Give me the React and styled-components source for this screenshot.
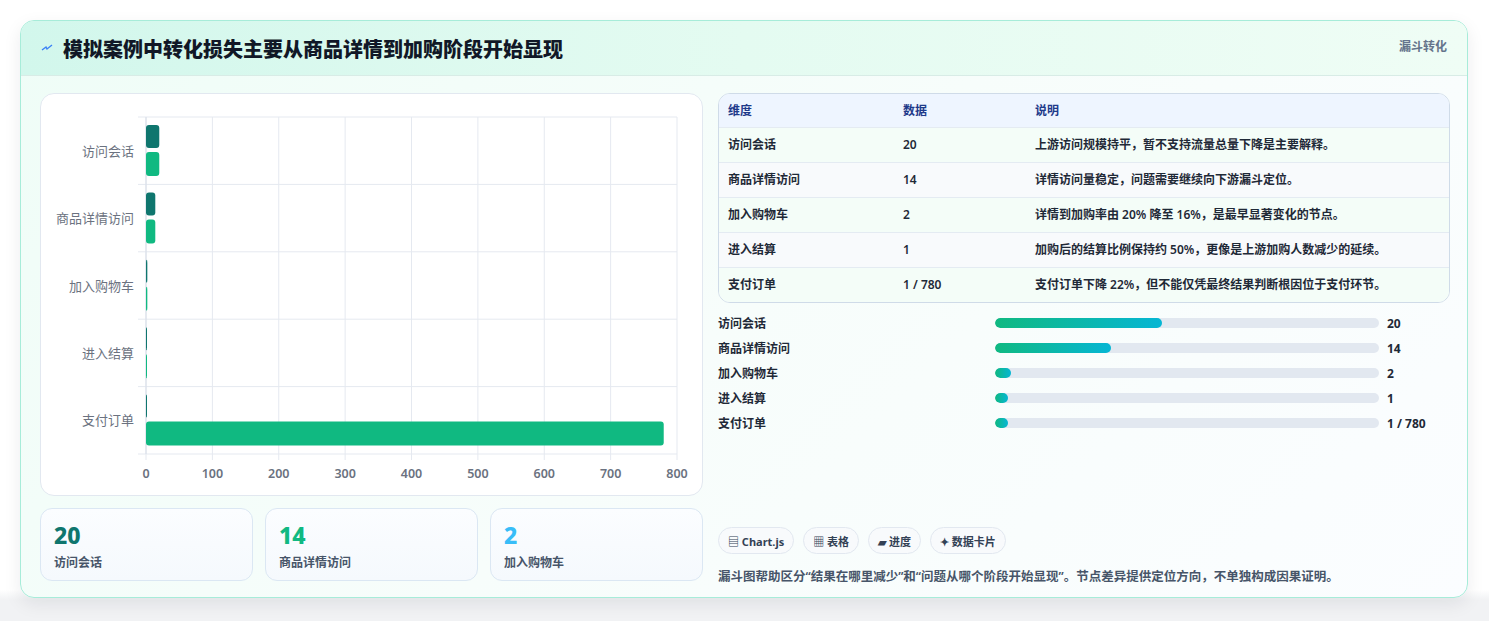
import React from "react";
import styled, { createGlobalStyle } from "styled-components";

const Global = createGlobalStyle`
  body { margin: 0; background: #fff; font-family: "Noto Sans", "Noto Sans CJK SC", sans-serif; }
`;

const Page = styled.div`
  padding: 20px 20px 22px 20px;
  background: linear-gradient(#fff 0, #fff 590px, #f1f2f4 600px);
  min-height: 621px;
  box-sizing: border-box;
`;

const Card = styled.div`
  width: 1448px;
  height: 578px;
  box-sizing: border-box;
  border: 1px solid #a7ecd9;
  border-radius: 14px;
  overflow: hidden;
  background: linear-gradient(135deg, #effdf7 0%, #f7fdfb 50%, #fbfdff 100%);
  box-shadow: 0 6px 18px rgba(15, 23, 42, 0.08);
`;

const Header = styled.div`
  height: 55px;
  box-sizing: border-box;
  display: flex;
  align-items: center;
  justify-content: space-between;
  padding: 0 20px 0 20px;
  background: linear-gradient(90deg, #d2f7ec 0%, #e4fbf1 50%, #effdf5 100%);
  border-bottom: 1px solid #d8ece6;
`;

const Title = styled.h1`
  margin: 0;
  font-size: 20px;
  font-weight: 800;
  color: #111827;
  display: flex;
  align-items: center;
  gap: 10px;
`;

const Tag = styled.span`
  font-size: 12px;
  font-weight: 700;
  color: #64748b;
  align-self: flex-start;
  margin-top: 16px;
`;

const Body = styled.div`
  display: grid;
  grid-template-columns: 663px 732px;
  column-gap: 15px;
  padding: 17px 19px 0 19px;
`;

const Col = styled.div`
  display: flex;
  flex-direction: column;
`;

const ChartBox = styled.div`
  height: 403px;
  box-sizing: border-box;
  border: 1px solid #e2e8f0;
  border-radius: 14px;
  background: #fff;
`;

const Stats = styled.div`
  display: grid;
  grid-template-columns: repeat(3, 1fr);
  gap: 12px;
  margin-top: 12px;
`;

const Stat = styled.div`
  height: 73px;
  box-sizing: border-box;
  border: 1px solid #dbe7f3;
  border-radius: 12px;
  background: linear-gradient(180deg, #fbfdff, #f5f9fd);
  padding: 12px 13px;
`;

const StatNum = styled.div`
  font-size: 23px;
  font-weight: 800;
  line-height: 28px;
  color: ${(p) => p.$color};
`;

const StatLabel = styled.div`
  font-size: 12px;
  font-weight: 600;
  color: #475569;
  margin-top: 4px;
`;

const Table = styled.div`
  border: 1px solid #cfdbe8;
  border-radius: 12px;
  overflow: hidden;
  background: #fff;
`;

const Row = styled.div`
  display: grid;
  grid-template-columns: 175px 132px 1fr;
  box-sizing: border-box;
  height: ${(p) => (p.$head ? 33 : 35)}px;
  line-height: 16px;
  align-items: center;
  padding: 0 9px;
  font-size: 12px;
  font-weight: ${(p) => (p.$head ? 700 : 600)};
  color: ${(p) => (p.$head ? "#1e3a8a" : "#1f2937")};
  background: ${(p) => (p.$head ? "#eef5ff" : p.$alt ? "#f8fafc" : "#f4fdf8")};
  border-top: ${(p) => (p.$head ? "none" : "1px solid #e4ebf2")};
`;

const Bars = styled.div`
  display: flex;
  flex-direction: column;
  gap: 8px;
  margin-top: 11px;
`;

const BarRow = styled.div`
  display: grid;
  grid-template-columns: 277px 392px 1fr;
  align-items: center;
  height: 17px;
  font-size: 12px;
  font-weight: 700;
  color: #1f2937;
`;

const Track = styled.div`
  height: 10px;
  border-radius: 5px;
  background: #e2e8f0;
  margin-right: 8px;
  overflow: hidden;
`;

const Fill = styled.div`
  height: 100%;
  border-radius: 5px;
  background: linear-gradient(90deg, #10b981, #06b6d4);
`;

const Chips = styled.div`
  display: flex;
  gap: 9px;
  margin-top: 96px;
`;

const Chip = styled.span`
  height: 27px;
  box-sizing: border-box;
  padding: 0 9px;
  display: inline-flex;
  align-items: center;
  gap: 3px;
  border: 1px solid #e2e8f0;
  border-radius: 14px;
  background: #f8fafc;
  font-size: 11px;
  font-weight: 700;
  color: #334155;
`;

const Note = styled.p`
  margin: 12px 0 0 0;
  font-size: 12.5px;
  font-weight: 600;
  color: #475569;
`;

const cats = ["访问会话", "商品详情访问", "加入购物车", "进入结算", "支付订单"];
const dark = [20, 14, 2, 1, 1];
const green = [20, 14, 2, 1, 780];

function Chart() {
  const x0 = 105, x1 = 636, y0 = 23, y1 = 360;
  const rh = (y1 - y0) / 5;
  const sx = (x1 - x0) / 800;
  return (
    <svg width="661" height="401" style={{ display: "block" }}>
      {[0, 100, 200, 300, 400, 500, 600, 700, 800].map((t) => (
        <g key={t}>
          <line x1={x0 + t * sx} x2={x0 + t * sx} y1={y0} y2={y1 + 6} stroke="#e5e9f0" />
          <text x={x0 + t * sx} y={384} textAnchor="middle" fontSize="12.5" fontWeight="600" fill="#6b7280" fontFamily="Noto Sans">
            {t}
          </text>
        </g>
      ))}
      {[0, 1, 2, 3, 4, 5].map((i) => (
        <line key={i} x1={x0 - 8} x2={x1} y1={y0 + i * rh} y2={y0 + i * rh} stroke="#e5e9f0" />
      ))}
      <line x1={x0} x2={x0} y1={y0} y2={y1} stroke="#d8dee8" />
      {cats.map((c, i) => {
        const top = y0 + i * rh;
        return (
          <g key={c}>
            <text x={93} y={top + rh / 2 + 5} textAnchor="end" fontSize="13" fill="#6b7280" fontFamily="Noto Sans CJK SC">
              {c}
            </text>
            <rect x={x0} y={top + 8} width={Math.max(dark[i] * sx, 1)} height={23} rx={3} fill="#0f766e" />
            <rect x={x0} y={top + 35} width={Math.max(green[i] * sx, 1)} height={24} rx={3} fill="#10b981" />
          </g>
        );
      })}
    </svg>
  );
}

const table = [
  ["访问会话", "20", "上游访问规模持平，暂不支持流量总量下降是主要解释。"],
  ["商品详情访问", "14", "详情访问量稳定，问题需要继续向下游漏斗定位。"],
  ["加入购物车", "2", "详情到加购率由 20% 降至 16%，是最早显著变化的节点。"],
  ["进入结算", "1", "加购后的结算比例保持约 50%，更像是上游加购人数减少的延续。"],
  ["支付订单", "1 / 780", "支付订单下降 22%，但不能仅凭最终结果判断根因位于支付环节。"],
];

const prog = [
  ["访问会话", 43.5, "20"],
  ["商品详情访问", 30.3, "14"],
  ["加入购物车", 4.2, "2"],
  ["进入结算", 3.4, "1"],
  ["支付订单", 3.4, "1 / 780"],
];

export default function App() {
  return (
    <>
      <Global />
      <Page>
        <Card>
          <Header>
            <Title>
              <svg width="12" height="10" viewBox="0 0 12 10">
                <path d="M1 7 L5 4 L6 6 L11 2" stroke="#3b82f6" strokeWidth="1.4" fill="none" />
              </svg>
              模拟案例中转化损失主要从商品详情到加购阶段开始显现
            </Title>
            <Tag>漏斗转化</Tag>
          </Header>
          <Body>
            <Col>
              <ChartBox>
                <Chart />
              </ChartBox>
              <Stats>
                <Stat>
                  <StatNum $color="#0f766e">20</StatNum>
                  <StatLabel>访问会话</StatLabel>
                </Stat>
                <Stat>
                  <StatNum $color="#10b981">14</StatNum>
                  <StatLabel>商品详情访问</StatLabel>
                </Stat>
                <Stat>
                  <StatNum $color="#38bdf8">2</StatNum>
                  <StatLabel>加入购物车</StatLabel>
                </Stat>
              </Stats>
            </Col>
            <Col>
              <Table>
                <Row $head>
                  <span>维度</span>
                  <span>数据</span>
                  <span>说明</span>
                </Row>
                {table.map((r, i) => (
                  <Row key={r[0]} $alt={i % 2 === 1}>
                    <span>{r[0]}</span>
                    <span>{r[1]}</span>
                    <span>{r[2]}</span>
                  </Row>
                ))}
              </Table>
              <Bars>
                {prog.map((p) => (
                  <BarRow key={p[0]}>
                    <span>{p[0]}</span>
                    <Track>
                      <Fill style={{ width: p[1] + "%" }} />
                    </Track>
                    <span>{p[2]}</span>
                  </BarRow>
                ))}
              </Bars>
              <Chips>
                <Chip>▤ Chart.js</Chip>
                <Chip>▦ 表格</Chip>
                <Chip>▰ 进度</Chip>
                <Chip>✦ 数据卡片</Chip>
              </Chips>
              <Note>漏斗图帮助区分“结果在哪里减少”和“问题从哪个阶段开始显现”。节点差异提供定位方向，不单独构成因果证明。</Note>
            </Col>
          </Body>
        </Card>
      </Page>
    </>
  );
}
